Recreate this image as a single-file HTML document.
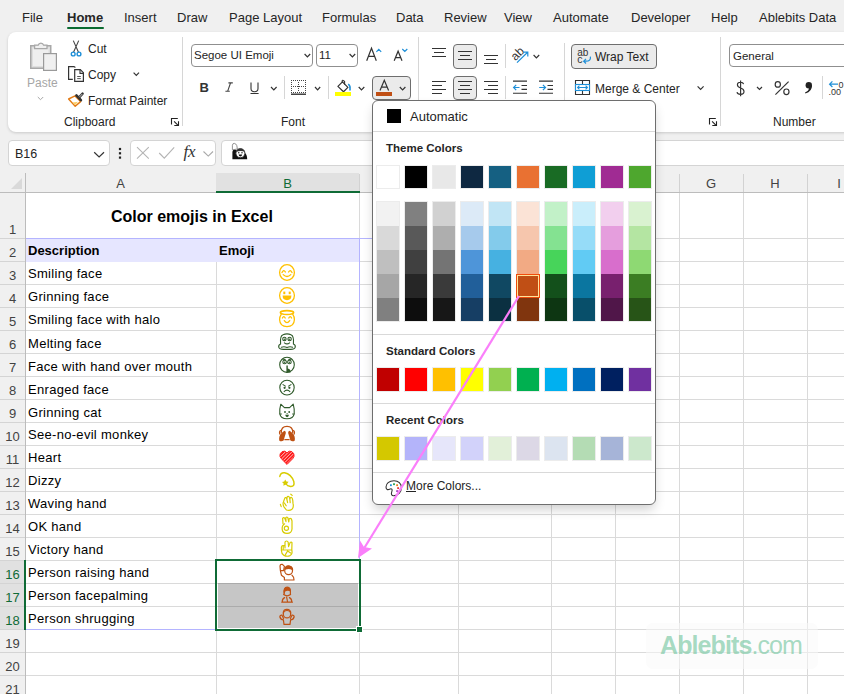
<!DOCTYPE html>
<html><head><meta charset="utf-8"><style>
html,body{margin:0;padding:0}
body{width:844px;height:694px;overflow:hidden;position:relative;background:#f0f0f0;font-family:"Liberation Sans", sans-serif}
.t{position:absolute;white-space:nowrap}
.r{position:absolute}
</style></head><body>
<div class="t" style="left:22px;top:11.00px;font-size:13px;line-height:13px;font-weight:400;color:#262626;">File</div>
<div class="t" style="left:67px;top:11.00px;font-size:13px;line-height:13px;font-weight:700;color:#262626;">Home</div>
<div class="t" style="left:124px;top:11.00px;font-size:13px;line-height:13px;font-weight:400;color:#262626;">Insert</div>
<div class="t" style="left:177px;top:11.00px;font-size:13px;line-height:13px;font-weight:400;color:#262626;">Draw</div>
<div class="t" style="left:229px;top:11.00px;font-size:13px;line-height:13px;font-weight:400;color:#262626;">Page Layout</div>
<div class="t" style="left:322px;top:11.00px;font-size:13px;line-height:13px;font-weight:400;color:#262626;">Formulas</div>
<div class="t" style="left:396px;top:11.00px;font-size:13px;line-height:13px;font-weight:400;color:#262626;">Data</div>
<div class="t" style="left:444px;top:11.00px;font-size:13px;line-height:13px;font-weight:400;color:#262626;">Review</div>
<div class="t" style="left:504px;top:11.00px;font-size:13px;line-height:13px;font-weight:400;color:#262626;">View</div>
<div class="t" style="left:553px;top:11.00px;font-size:13px;line-height:13px;font-weight:400;color:#262626;">Automate</div>
<div class="t" style="left:631px;top:11.00px;font-size:13px;line-height:13px;font-weight:400;color:#262626;">Developer</div>
<div class="t" style="left:711px;top:11.00px;font-size:13px;line-height:13px;font-weight:400;color:#262626;">Help</div>
<div class="t" style="left:759px;top:11.00px;font-size:13px;line-height:13px;font-weight:400;color:#262626;">Ablebits Data</div>
<div class="r" style="left:67px;top:27px;width:37px;height:2px;background:#0b6b30;border-radius:1px"></div>
<div class="r" style="left:8px;top:32px;width:900px;height:100px;background:#fff;border-radius:8px;box-shadow:0 1px 3px rgba(0,0,0,0.16)"></div>
<div class="r" style="left:182px;top:37px;width:1px;height:89px;background:#d6d6d6"></div>
<div class="r" style="left:418px;top:37px;width:1px;height:89px;background:#d6d6d6"></div>
<div class="r" style="left:564px;top:43px;width:1px;height:83px;background:#d6d6d6"></div>
<div class="r" style="left:720px;top:37px;width:1px;height:89px;background:#d6d6d6"></div>
<div class="r" style="left:284px;top:76px;width:1px;height:23px;background:#d6d6d6"></div>
<div class="r" style="left:328px;top:76px;width:1px;height:23px;background:#d6d6d6"></div>
<div class="r" style="left:505px;top:44px;width:1px;height:24px;background:#d6d6d6"></div>
<div class="r" style="left:505px;top:76px;width:1px;height:23px;background:#d6d6d6"></div>
<div class="r" style="left:822px;top:76px;width:1px;height:23px;background:#d6d6d6"></div>
<div class="t" style="left:64px;top:115.84px;font-size:12px;line-height:12px;font-weight:400;color:#242424;">Clipboard</div>
<div class="t" style="left:281px;top:115.84px;font-size:12px;line-height:12px;font-weight:400;color:#242424;">Font</div>
<div class="t" style="left:773px;top:115.84px;font-size:12px;line-height:12px;font-weight:400;color:#242424;">Number</div>
<div class="t" style="left:27px;top:76.84px;font-size:12px;line-height:12px;font-weight:400;color:#a6a6a6;">Paste</div>
<div class="t" style="left:88px;top:42.84px;font-size:12px;line-height:12px;font-weight:400;color:#242424;">Cut</div>
<div class="t" style="left:88px;top:68.84px;font-size:12px;line-height:12px;font-weight:400;color:#242424;">Copy</div>
<div class="t" style="left:88px;top:94.84px;font-size:12px;line-height:12px;font-weight:400;color:#242424;">Format Painter</div>
<div class="r" style="left:191px;top:44px;width:122px;height:23px;background:#fff;border:1px solid #8f8f8f;border-radius:4px;box-sizing:border-box"></div>
<div class="t" style="left:194px;top:50.27px;font-size:11.5px;line-height:11.5px;font-weight:400;color:#242424;">Segoe UI Emoji</div>
<div class="r" style="left:316px;top:44px;width:42px;height:23px;background:#fff;border:1px solid #8f8f8f;border-radius:4px;box-sizing:border-box"></div>
<div class="t" style="left:319px;top:50.27px;font-size:11.5px;line-height:11.5px;font-weight:400;color:#242424;">11</div>
<div class="r" style="left:453px;top:44px;width:24px;height:25px;background:#ebebeb;border:1px solid #6e6e6e;border-radius:4px;box-sizing:border-box"></div>
<div class="r" style="left:453px;top:76px;width:24px;height:24px;background:#ebebeb;border:1px solid #6e6e6e;border-radius:4px;box-sizing:border-box"></div>
<div class="r" style="left:571px;top:44px;width:86px;height:25px;background:#ebebeb;border:1px solid #6e6e6e;border-radius:4px;box-sizing:border-box"></div>
<div class="t" style="left:595px;top:50.84px;font-size:12px;line-height:12px;font-weight:400;color:#242424;">Wrap Text</div>
<div class="t" style="left:595px;top:83.34px;font-size:12px;line-height:12px;font-weight:400;color:#242424;">Merge &amp; Center</div>
<div class="r" style="left:372px;top:76px;width:39px;height:24px;background:#ebebeb;border:1px solid #6e6e6e;border-radius:4px;box-sizing:border-box"></div>
<div class="r" style="left:729px;top:44px;width:130px;height:23px;background:#fff;border:1px solid #8f8f8f;border-radius:4px;box-sizing:border-box"></div>
<div class="t" style="left:733px;top:50.77px;font-size:11.5px;line-height:11.5px;font-weight:400;color:#242424;">General</div>
<div class="r" style="left:8px;top:140px;width:102px;height:26px;background:#fff;border:1px solid #d4d4d4;border-radius:4px;box-sizing:border-box"></div>
<div class="t" style="left:15px;top:148.02px;font-size:12.5px;line-height:12.5px;font-weight:400;color:#242424;">B16</div>
<div class="r" style="left:130px;top:140px;width:86px;height:26px;background:#fff;border:1px solid #d4d4d4;border-radius:4px;box-sizing:border-box"></div>
<div class="r" style="left:221px;top:140px;width:640px;height:26px;background:#fff;border:1px solid #d4d4d4;border-radius:4px;box-sizing:border-box"></div>
<svg class="r" style="left:0;top:0" width="844" height="694"><rect x="30.75" y="45.75" width="20" height="22.5" fill="#dedede" stroke="#a8a8a8" stroke-width="1.5"/>
<rect x="33" y="48.5" width="15.5" height="17.5" fill="#efefef"/>
<path d="M34.6 48.6 V45.2 H38.2 A2.8 2.8 0 0 1 43.6 45.2 H47 V48.6 Z" fill="#f0f0f0" stroke="#a8a8a8" stroke-width="1.3"/>
<rect x="43.6" y="53.6" width="12.8" height="16.8" fill="#f0f0f0" stroke="#9a9a9a" stroke-width="1.2"/>
<path d="M37.8 97 L40.5 99.7 L43.2 97" stroke="#a6a6a6" fill="none" stroke-width="1"/>
<path d="M73.3 40.6 L78.5 52.2 M78.7 40.6 L73.5 52.2" stroke="#444" stroke-width="1.1" fill="none"/>
<circle cx="73.2" cy="54" r="1.9" stroke="#1e8fd8" stroke-width="1.4" fill="none"/><circle cx="79" cy="54" r="1.9" stroke="#1e8fd8" stroke-width="1.4" fill="none"/>
<path d="M75.4 67.6 L74 66.6 H68.6 V79.4 H72.8" fill="none" stroke="#333" stroke-width="1.2"/>
<path d="M74.7 69.6 H80.3 L83.4 72.7 V81.3 H74.7 Z" fill="#fff" stroke="#333" stroke-width="1.2"/>
<path d="M80 69.6 V73.4 H83.4" fill="none" stroke="#333" stroke-width="1.1"/>
<path d="M77.2 76.5 H80.8 M77.2 78.6 H80.8" stroke="#444" stroke-width="0.9"/>
<path d="M133.6 72.6 L136.3 75.3 L139 72.6" stroke="#333" fill="none" stroke-width="1.2"/>
<path d="M68.6 99 L75 95.9 L80.6 101.6 L75.2 106.3 Z" fill="#fff" stroke="#e27a14" stroke-width="1.4" stroke-linejoin="round"/>
<path d="M72.3 102.6 L78 101.8 L75.3 105 Z" fill="#fbcf66"/>
<path d="M76.4 95.4 L80.9 100.2" stroke="#333" stroke-width="2.6" stroke-linecap="round"/>
<path d="M78.9 97.6 L82.6 93.6" stroke="#333" stroke-width="2.4" stroke-linecap="round"/>
<path d="M79.3 97.2 L82.3 94" stroke="#fff" stroke-width="0.7"/>
<path d="M171.5 124.5 V118.5 H177.8 M174.1 121.4 L178.1 125.3 M174.3 125.5 H178.5 V121.3" stroke="#222" stroke-width="1.1" fill="none"/>
<path d="M709.5 124.5 V118.5 H715.8 M712.1 121.4 L716.1 125.3 M712.3 125.5 H716.5 V121.3" stroke="#222" stroke-width="1.1" fill="none"/>
<path d="M304.6 54 L307.4 56.8 L310.2 54 M349.6 54 L352.4 56.8 L355.2 54" stroke="#333" stroke-width="1.2" fill="none"/>
<path d="M366.7 60.8 L371.5 48.2 L376.3 60.8 M368.5 56.3 H374.5" stroke="#333" stroke-width="1.2" fill="none"/>
<path d="M376.4 51.9 L378.8 49.4 L381.2 51.9 M402.3 49 L404.8 51.5 L407.3 49" stroke="#1e8fd8" stroke-width="1.2" fill="none"/>
<path d="M394.2 60.8 L398.1 51.2 L402 60.8 M395.5 57.6 H400.7" stroke="#333" stroke-width="1.2" fill="none"/>
<text x="199.6" y="91.6" font-family="Liberation Sans" font-weight="700" font-size="13" fill="#333">B</text>
<path d="M230.6 82.8 L227.6 91.4 M228.4 82.9 H232.8 M225.4 91.3 H229.8" stroke="#444" stroke-width="1.1" fill="none"/>
<path d="M251 82.6 V88.6 Q251 91.8 254.5 91.8 Q258 91.8 258 88.6 V82.6 M250.5 93.5 H258.6" stroke="#333" stroke-width="1.1" fill="none"/>
<path d="M271 87 L273.8 89.8 L276.6 87 M315 87 L317.6 89.8 L320.2 87 M358.7 87 L361.5 89.8 L364.3 87 M399.8 87 L402.6 89.8 L405.4 87" stroke="#333" stroke-width="1.2" fill="none"/>
<path d="M291 80h1v1h-1zM291 86h1v1h-1zM291 92h1v1h-1zM293 80h1v1h-1zM293 86h1v1h-1zM293 92h1v1h-1zM295 80h1v1h-1zM295 86h1v1h-1zM295 92h1v1h-1zM297 80h1v1h-1zM297 86h1v1h-1zM297 92h1v1h-1zM299 80h1v1h-1zM299 86h1v1h-1zM299 92h1v1h-1zM301 80h1v1h-1zM301 86h1v1h-1zM301 92h1v1h-1zM303 80h1v1h-1zM303 86h1v1h-1zM303 92h1v1h-1zM305 80h1v1h-1zM305 86h1v1h-1zM305 92h1v1h-1zM291 82h1v1h-1zM298 82h1v1h-1zM305 82h1v1h-1zM291 84h1v1h-1zM298 84h1v1h-1zM305 84h1v1h-1zM291 86h1v1h-1zM298 86h1v1h-1zM305 86h1v1h-1zM291 88h1v1h-1zM298 88h1v1h-1zM305 88h1v1h-1zM291 90h1v1h-1zM298 90h1v1h-1zM305 90h1v1h-1z" fill="#444"/>
<path d="M291 94.2 H306" stroke="#222" stroke-width="1.3"/>
<path d="M337.9 86.4 L342.4 81.9 L347.9 87.4 L343.5 91.7 Z" fill="#fff" stroke="#333" stroke-width="1.2" stroke-linejoin="round"/>
<path d="M342.2 82 V80.8 Q342.6 79.9 343.6 80.6 L344.6 81.6 V84.8" stroke="#333" stroke-width="1.1" fill="none"/>
<path d="M348.2 84.2 Q350.4 85.6 350 88.6 V90.6" stroke="#1e8fd8" stroke-width="1.6" fill="none"/>
<rect x="335" y="92" width="16" height="4" fill="#ffff00"/>
<path d="M380 90.6 L384.3 80.3 L388.6 90.6 M381.5 87.2 H387.1" stroke="#333" stroke-width="1.2" fill="none"/>
<rect x="376" y="92" width="16" height="4" fill="#c04f15"/>
<path d="M432 48.5 H446 M434 52.5 H444 M432 56.5 H446 M458 51.5 H472 M460 55.5 H470 M458 59.5 H472 M484 55.5 H498 M486 59.5 H496 M484 63.5 H498 M432 81.5 H446 M432 85.5 H442 M432 89.5 H446 M432 93.5 H442 M458 81.5 H472 M460 85.5 H470 M458 89.5 H472 M460 93.5 H470 M484 81.5 H498 M488 85.5 H498 M484 89.5 H498 M488 93.5 H498 M513 81.1 H527 M521.5 85.5 H527 M521.5 89.4 H527 M513 93.3 H527 M539 81.1 H553 M547.5 85.5 H553 M547.5 89.4 H553 M539 93.3 H553" stroke="#333" stroke-width="1.1" fill="none"/>
<path d="M513.6 87.5 H519.5 M516.2 84.9 L513.6 87.5 L516.2 90.1 M539.2 87.5 H545.5 M542.9 84.9 L545.5 87.5 L542.9 90.1" stroke="#1e8fd8" stroke-width="1.2" fill="none"/>
<text x="510" y="57.8" font-family="Liberation Sans" font-size="12" fill="#333" transform="rotate(-45 517 53)">ab</text>
<path d="M517 62.6 L527.6 52.2 M523.2 52.2 H527.8 V56.6" stroke="#1e8fd8" stroke-width="1.2" fill="none"/>
<path d="M533.6 55 L536.4 57.8 L539.2 55" stroke="#333" stroke-width="1.2" fill="none"/>
<text x="577.2" y="55.6" font-family="Liberation Sans" font-size="10" fill="#333">ab</text>
<text x="577.2" y="63" font-family="Liberation Sans" font-size="10.5" fill="#333">c</text>
<path d="M590.4 56.6 Q591 61.2 586 61.2 H584 M586 58.9 L583.7 61.2 L586 63.5" stroke="#1e8fd8" stroke-width="1.2" fill="none"/>
<path d="M575.5 80.5 H589.5 V94.5 H575.5 Z M582.5 80.5 V84.5 M582.5 90.5 V94.5" stroke="#333" stroke-width="1.1" fill="none"/>
<rect x="575.5" y="84.5" width="14" height="6" stroke="#1e8fd8" stroke-width="1.1" fill="#fff"/>
<path d="M577.6 87.5 H587.4 M579.4 85.7 L577.6 87.5 L579.4 89.3 M585.6 85.7 L587.4 87.5 L585.6 89.3" stroke="#1e8fd8" stroke-width="1.1" fill="none"/>
<path d="M697.6 86.4 L700.6 89.4 L703.6 86.4" stroke="#333" stroke-width="1.2" fill="none"/>
<path d="M743.6 84.2 Q743.2 82.2 740.4 82.2 Q737.4 82.2 737.4 84.8 Q737.4 87 740.6 88 Q744 89 744 91.6 Q744 94.4 740.6 94.4 Q737.4 94.4 737 92.2 M740.6 80.6 V96.2" stroke="#333" stroke-width="1.15" fill="none"/>
<path d="M757 87 L759.5 89.5 L762 87" stroke="#333" stroke-width="1.2" fill="none"/>
<path d="M788.6 81.6 L775.4 94.6" stroke="#333" stroke-width="1.2" fill="none"/><ellipse cx="777.8" cy="84.4" rx="2.6" ry="2.8" stroke="#333" stroke-width="1.2" fill="none"/><ellipse cx="786.4" cy="91.8" rx="2.6" ry="2.8" stroke="#333" stroke-width="1.2" fill="none"/>
<circle cx="808.8" cy="85.2" r="3.2" fill="#222"/><path d="M811.8 85.6 Q812.4 91.4 805.4 93.6 L805 92.6 Q809.2 90.6 809 87.4 Z" fill="#222"/>
<path d="M829.6 84.2 H838 M832.4 81.4 L829.6 84.2 L832.4 87" stroke="#1e8fd8" stroke-width="1.2" fill="none"/>
<text x="838.6" y="88" font-family="Liberation Sans" font-size="9" fill="#333">0</text>
<text x="828.6" y="95.2" font-family="Liberation Sans" font-size="9" fill="#333">.00</text>
<path d="M94.2 152.2 L99.1 157 L104 152.2" stroke="#333" stroke-width="1.2" fill="none"/>
<rect x="118.9" y="147.9" width="2.2" height="2.2" fill="#222"/><rect x="118.9" y="152.2" width="2.2" height="2.2" fill="#222"/><rect x="118.9" y="156.5" width="2.2" height="2.2" fill="#222"/>
<path d="M137 147.2 L148.8 158.6 M148.8 147.2 L137 158.6 M159.2 153 L164.3 158.2 L174.2 147.4" stroke="#b4b4b4" stroke-width="1.1" fill="none"/>
<text x="183.4" y="157.4" font-family="Liberation Serif" font-style="italic" font-size="17" fill="#333">fx</text>
<path d="M203.5 151.5 L208.3 156.1 L213 151.5" stroke="#a8a8a8" stroke-width="1.1" fill="none"/>
<path d="M232.4 159.2 V151.8 Q232.6 149.4 235.2 149.4 L237.6 151.4 L238 156.2 H242.8 L244.2 152.6 Q247.2 154.4 247.2 159.2 Z" fill="#111"/>
<circle cx="240.4" cy="153.2" r="4.5" fill="#fff" stroke="#222" stroke-width="0.9"/>
<path d="M236 152 Q236.6 148.4 240.4 148.4 Q244.2 148.4 244.8 152 Q241 149.8 236 152 Z" fill="#333"/>
<circle cx="238.8" cy="152.8" r="0.7" fill="#111"/><circle cx="242" cy="152.8" r="0.7" fill="#111"/>
<path d="M238.6 154.6 H242.2 Q241.9 156.6 240.4 156.6 Q238.9 156.6 238.6 154.6 Z" fill="#111"/>
<path d="M232.4 149.8 V145.2 Q232.6 143.2 234.4 143.4 Q236 143.6 236.8 145.6 L237.4 149 Z" fill="#fff" stroke="#777" stroke-width="0.8"/></svg>
<div class="r" style="left:26px;top:193px;width:818px;height:501px;background:#fff"></div>
<div class="r" style="left:0px;top:166px;width:844px;height:26px;background:#f0f0f0"></div>
<div class="r" style="left:0px;top:193px;width:25px;height:501px;background:#f0f0f0"></div>
<div class="r" style="left:0px;top:561px;width:24px;height:68px;background:#e1e1e1"></div>
<div class="r" style="left:0px;top:192px;width:844px;height:1px;background:#bcbcbc"></div>
<div class="r" style="left:25px;top:173px;width:1px;height:521px;background:#bcbcbc"></div>
<div class="r" style="left:216px;top:174px;width:1px;height:18px;background:#d2d2d2"></div>
<div class="r" style="left:359px;top:174px;width:1px;height:18px;background:#d2d2d2"></div>
<div class="r" style="left:458px;top:174px;width:1px;height:18px;background:#d2d2d2"></div>
<div class="r" style="left:551px;top:174px;width:1px;height:18px;background:#d2d2d2"></div>
<div class="r" style="left:615px;top:174px;width:1px;height:18px;background:#d2d2d2"></div>
<div class="r" style="left:679px;top:174px;width:1px;height:18px;background:#d2d2d2"></div>
<div class="r" style="left:743px;top:174px;width:1px;height:18px;background:#d2d2d2"></div>
<div class="r" style="left:807px;top:174px;width:1px;height:18px;background:#d2d2d2"></div>
<div class="r" style="left:871px;top:174px;width:1px;height:18px;background:#d2d2d2"></div>
<div class="r" style="left:216px;top:173px;width:143px;height:18px;background:#e1e1e1"></div>
<div class="r" style="left:216px;top:191px;width:144px;height:2px;background:#0f6b36"></div>
<div class="r" style="left:0px;top:238px;width:25px;height:1px;background:#d4d4d4"></div>
<div class="r" style="left:0px;top:261px;width:25px;height:1px;background:#d4d4d4"></div>
<div class="r" style="left:0px;top:284px;width:25px;height:1px;background:#d4d4d4"></div>
<div class="r" style="left:0px;top:307px;width:25px;height:1px;background:#d4d4d4"></div>
<div class="r" style="left:0px;top:330px;width:25px;height:1px;background:#d4d4d4"></div>
<div class="r" style="left:0px;top:353px;width:25px;height:1px;background:#d4d4d4"></div>
<div class="r" style="left:0px;top:376px;width:25px;height:1px;background:#d4d4d4"></div>
<div class="r" style="left:0px;top:399px;width:25px;height:1px;background:#d4d4d4"></div>
<div class="r" style="left:0px;top:422px;width:25px;height:1px;background:#d4d4d4"></div>
<div class="r" style="left:0px;top:445px;width:25px;height:1px;background:#d4d4d4"></div>
<div class="r" style="left:0px;top:468px;width:25px;height:1px;background:#d4d4d4"></div>
<div class="r" style="left:0px;top:491px;width:25px;height:1px;background:#d4d4d4"></div>
<div class="r" style="left:0px;top:514px;width:25px;height:1px;background:#d4d4d4"></div>
<div class="r" style="left:0px;top:537px;width:25px;height:1px;background:#d4d4d4"></div>
<div class="r" style="left:0px;top:560px;width:25px;height:1px;background:#d4d4d4"></div>
<div class="r" style="left:0px;top:583px;width:25px;height:1px;background:#d4d4d4"></div>
<div class="r" style="left:0px;top:606px;width:25px;height:1px;background:#d4d4d4"></div>
<div class="r" style="left:0px;top:629px;width:25px;height:1px;background:#d4d4d4"></div>
<div class="r" style="left:0px;top:652px;width:25px;height:1px;background:#d4d4d4"></div>
<div class="r" style="left:0px;top:675px;width:25px;height:1px;background:#d4d4d4"></div>
<div class="r" style="left:0px;top:698px;width:25px;height:1px;background:#d4d4d4"></div>
<div class="r" style="left:24px;top:560px;width:2px;height:70px;background:#0f6b36"></div>
<div class="r" style="left:26px;top:238px;width:818px;height:1px;background:#dadada"></div>
<div class="r" style="left:26px;top:261px;width:818px;height:1px;background:#dadada"></div>
<div class="r" style="left:26px;top:284px;width:818px;height:1px;background:#dadada"></div>
<div class="r" style="left:26px;top:307px;width:818px;height:1px;background:#dadada"></div>
<div class="r" style="left:26px;top:330px;width:818px;height:1px;background:#dadada"></div>
<div class="r" style="left:26px;top:353px;width:818px;height:1px;background:#dadada"></div>
<div class="r" style="left:26px;top:376px;width:818px;height:1px;background:#dadada"></div>
<div class="r" style="left:26px;top:399px;width:818px;height:1px;background:#dadada"></div>
<div class="r" style="left:26px;top:422px;width:818px;height:1px;background:#dadada"></div>
<div class="r" style="left:26px;top:445px;width:818px;height:1px;background:#dadada"></div>
<div class="r" style="left:26px;top:468px;width:818px;height:1px;background:#dadada"></div>
<div class="r" style="left:26px;top:491px;width:818px;height:1px;background:#dadada"></div>
<div class="r" style="left:26px;top:514px;width:818px;height:1px;background:#dadada"></div>
<div class="r" style="left:26px;top:537px;width:818px;height:1px;background:#dadada"></div>
<div class="r" style="left:26px;top:560px;width:818px;height:1px;background:#dadada"></div>
<div class="r" style="left:26px;top:583px;width:818px;height:1px;background:#dadada"></div>
<div class="r" style="left:26px;top:606px;width:818px;height:1px;background:#dadada"></div>
<div class="r" style="left:26px;top:629px;width:818px;height:1px;background:#dadada"></div>
<div class="r" style="left:26px;top:652px;width:818px;height:1px;background:#dadada"></div>
<div class="r" style="left:26px;top:675px;width:818px;height:1px;background:#dadada"></div>
<div class="r" style="left:26px;top:698px;width:818px;height:1px;background:#dadada"></div>
<div class="r" style="left:216px;top:193px;width:1px;height:501px;background:#dadada"></div>
<div class="r" style="left:359px;top:193px;width:1px;height:501px;background:#dadada"></div>
<div class="r" style="left:458px;top:193px;width:1px;height:501px;background:#dadada"></div>
<div class="r" style="left:551px;top:193px;width:1px;height:501px;background:#dadada"></div>
<div class="r" style="left:615px;top:193px;width:1px;height:501px;background:#dadada"></div>
<div class="r" style="left:679px;top:193px;width:1px;height:501px;background:#dadada"></div>
<div class="r" style="left:743px;top:193px;width:1px;height:501px;background:#dadada"></div>
<div class="r" style="left:807px;top:193px;width:1px;height:501px;background:#dadada"></div>
<div class="r" style="left:871px;top:193px;width:1px;height:501px;background:#dadada"></div>
<div class="r" style="left:216px;top:193px;width:143px;height:45px;background:#fff"></div>
<div class="r" style="left:26px;top:239px;width:333px;height:23px;background:#e6e6ff"></div>
<div class="r" style="left:26px;top:238px;width:346px;height:1px;background:#b4b4ff"></div>
<div class="r" style="left:359px;top:238px;width:1px;height:391px;background:#b4b4ff"></div>
<div class="r" style="left:26px;top:629px;width:333px;height:1px;background:#b4b4ff"></div>
<div class="t" style="left:0;width:25px;text-align:center;top:223.00px;font-size:13px;line-height:13px;color:#424242">1</div>
<div class="t" style="left:0;width:25px;text-align:center;top:246.00px;font-size:13px;line-height:13px;color:#424242">2</div>
<div class="t" style="left:0;width:25px;text-align:center;top:269.00px;font-size:13px;line-height:13px;color:#424242">3</div>
<div class="t" style="left:0;width:25px;text-align:center;top:292.00px;font-size:13px;line-height:13px;color:#424242">4</div>
<div class="t" style="left:0;width:25px;text-align:center;top:315.00px;font-size:13px;line-height:13px;color:#424242">5</div>
<div class="t" style="left:0;width:25px;text-align:center;top:338.00px;font-size:13px;line-height:13px;color:#424242">6</div>
<div class="t" style="left:0;width:25px;text-align:center;top:361.00px;font-size:13px;line-height:13px;color:#424242">7</div>
<div class="t" style="left:0;width:25px;text-align:center;top:384.00px;font-size:13px;line-height:13px;color:#424242">8</div>
<div class="t" style="left:0;width:25px;text-align:center;top:407.00px;font-size:13px;line-height:13px;color:#424242">9</div>
<div class="t" style="left:0;width:25px;text-align:center;top:430.00px;font-size:13px;line-height:13px;color:#424242">10</div>
<div class="t" style="left:0;width:25px;text-align:center;top:453.00px;font-size:13px;line-height:13px;color:#424242">11</div>
<div class="t" style="left:0;width:25px;text-align:center;top:476.00px;font-size:13px;line-height:13px;color:#424242">12</div>
<div class="t" style="left:0;width:25px;text-align:center;top:499.00px;font-size:13px;line-height:13px;color:#424242">13</div>
<div class="t" style="left:0;width:25px;text-align:center;top:522.00px;font-size:13px;line-height:13px;color:#424242">14</div>
<div class="t" style="left:0;width:25px;text-align:center;top:545.00px;font-size:13px;line-height:13px;color:#424242">15</div>
<div class="t" style="left:0;width:25px;text-align:center;top:568.00px;font-size:13px;line-height:13px;color:#0f6b36">16</div>
<div class="t" style="left:0;width:25px;text-align:center;top:591.00px;font-size:13px;line-height:13px;color:#0f6b36">17</div>
<div class="t" style="left:0;width:25px;text-align:center;top:614.00px;font-size:13px;line-height:13px;color:#0f6b36">18</div>
<div class="t" style="left:0;width:25px;text-align:center;top:637.00px;font-size:13px;line-height:13px;color:#424242">19</div>
<div class="t" style="left:0;width:25px;text-align:center;top:660.00px;font-size:13px;line-height:13px;color:#424242">20</div>
<div class="t" style="left:0;width:25px;text-align:center;top:683.00px;font-size:13px;line-height:13px;color:#424242">21</div>
<div class="t" style="left:25px;width:191px;text-align:center;top:177.00px;font-size:13px;line-height:13px;color:#424242">A</div>
<div class="t" style="left:216px;width:143px;text-align:center;top:177.00px;font-size:13px;line-height:13px;color:#0f6b36">B</div>
<div class="t" style="left:679px;width:64px;text-align:center;top:177.00px;font-size:13px;line-height:13px;color:#424242">G</div>
<div class="t" style="left:743px;width:64px;text-align:center;top:177.00px;font-size:13px;line-height:13px;color:#424242">H</div>
<div class="t" style="left:807px;width:64px;text-align:center;top:177.00px;font-size:13px;line-height:13px;color:#424242">I</div>
<svg class="r" style="left:0;top:0" width="30" height="200"><path d="M22 178 V189 H11 Z" fill="#d9d9d9"/></svg>
<div class="r" style="left:218px;top:583px;width:140px;height:45px;background:#c6c6c6"></div>
<div class="r" style="left:218px;top:606px;width:140px;height:1px;background:#ababab"></div>
<div class="r" style="left:218px;top:583px;width:140px;height:1px;background:#ababab"></div>
<div class="r" style="left:215px;top:559px;width:146px;height:72px;border:2px solid #0f6b36;box-sizing:border-box"></div>
<div class="r" style="left:356px;top:626px;width:7px;height:7px;background:#0f6b36;border:1px solid #fff;box-sizing:border-box"></div>
<svg class="r" style="left:0;top:0" width="844" height="694"><g stroke="#ffc000" stroke-width="1.3" fill="none" stroke-linecap="round"><ellipse cx="287" cy="272.5" rx="7.4" ry="7.8"/><path d="M282 272.6 Q283.6 268.8 285.4 272 M288.6 272 Q290.4 268.8 292 272.6 M283.2 274.6 Q287 278.4 290.8 274.6"/></g>
<g stroke="#ffc000" stroke-width="1.3" fill="none"><ellipse cx="287" cy="295.5" rx="7.4" ry="7.8"/></g><rect x="283.3" y="291.6" width="2" height="2.6" fill="#ffc000"/><rect x="288.7" y="291.6" width="2" height="2.6" fill="#ffc000"/><path d="M282.6 295.6 H291.4 Q291.4 300.2 287 300.2 Q282.6 300.2 282.6 295.6 Z" fill="#ffc000"/>
<g stroke="#ffc000" stroke-width="1.3" fill="none" stroke-linecap="round"><path d="M281.2 314.4 Q279.4 317 279.6 319.8 Q280 326.6 287 326.6 Q294 326.6 294.4 319.8 Q294.6 317 292.8 314.4"/><ellipse cx="287" cy="312.6" rx="6.6" ry="1.9" stroke-width="1.7"/><path d="M282.4 318 Q283.8 315.4 285.2 318 M288.8 318 Q290.2 315.4 291.6 318 M284.3 320.6 Q287 324.8 289.7 320.6"/></g>
<g stroke="#2f5a2a" stroke-width="1.1" fill="none" stroke-linecap="round" stroke-linejoin="round"><path d="M280.6 344 Q279.8 336 283 334.8 Q287 333 291 334.8 Q294.2 336 293.4 344 Q295.8 345 295.2 347.4 Q294.4 349.6 290 349.4 L284 349.4 Q279.6 349.6 278.8 347.4 Q278.2 345 280.6 344 Z"/><circle cx="284.4" cy="339" r="1.7"/><circle cx="289.6" cy="339" r="1.7"/><path d="M284.4 342.8 Q287 345 289.6 342.8 M281.4 347.2 Q284 346.2 287 347.4 Q290 346.2 292.6 347.2"/></g><circle cx="284.6" cy="339.2" r="0.7" fill="#2f5a2a"/><circle cx="289.4" cy="339.2" r="0.7" fill="#2f5a2a"/>
<g stroke="#2f5a2a" stroke-width="1.1" fill="none"><ellipse cx="287" cy="364.8" rx="7.3" ry="7.6"/><circle cx="284.6" cy="362" r="1.8"/><circle cx="289.4" cy="362" r="1.8"/><path d="M282.2 359 L285.6 359.6 M291.8 359 L288.4 359.6"/></g><circle cx="284.6" cy="362.2" r="0.7" fill="#2f5a2a"/><circle cx="289.4" cy="362.2" r="0.7" fill="#2f5a2a"/><path d="M286.4 365.6 H287.8 V368.4 Q290.8 368.8 290.6 372.4 H286.4 Z" fill="#2f5a2a"/>
<g stroke="#2f5a2a" stroke-width="1.1" fill="none"><ellipse cx="287" cy="387.6" rx="7.2" ry="7.4"/><path d="M282.6 384.4 L285.8 386.4 M291.4 384.4 L288.2 386.4 M283.8 391.8 Q287 388.6 290.2 391.8"/></g><circle cx="284.6" cy="387.8" r="1.1" fill="#2f5a2a"/><circle cx="289.4" cy="387.8" r="1.1" fill="#2f5a2a"/>
<g stroke="#2f5a2a" stroke-width="1.1" fill="none" stroke-linejoin="round"><path d="M280.8 404.2 L284.4 407.6 H289.6 L293.2 404.2 Q294.6 409 294.2 413.6 Q293.4 418.8 287 418.8 Q280.6 418.8 279.8 413.6 Q279.4 409 280.8 404.2 Z"/><path d="M279.4 414 H282 M292 414 H294.6" stroke-width="0.8"/></g><circle cx="285" cy="412" r="0.9" fill="#2f5a2a"/><circle cx="289.2" cy="412" r="0.9" fill="#2f5a2a"/><circle cx="287.1" cy="413.6" r="0.6" fill="#2f5a2a"/><path d="M285.2 414.8 H289 Q288.6 417.2 287.1 417.2 Q285.6 417.2 285.2 414.8 Z" fill="#2f5a2a"/>
<g stroke="#bf5214" stroke-width="1.3" fill="none"><path d="M281.2 433 Q281 426.4 287 426.4 Q293 426.4 292.8 433"/><path d="M280 434.4 Q278.6 430.8 281.4 430.4 M294 434.4 Q295.4 430.8 292.6 430.4 M284.4 439.6 H289.6"/></g><path d="M279.2 440.4 Q278.6 436 281.6 433 L284.4 430.8 Q286.6 431.6 285.4 434.6 L283.6 440.6 Q281.2 442 279.2 440.4 Z" fill="#bf5214"/><path d="M294.8 440.4 Q295.4 436 292.4 433 L289.6 430.8 Q287.4 431.6 288.6 434.6 L290.4 440.6 Q292.8 442 294.8 440.4 Z" fill="#bf5214"/>
<defs><pattern id="hs" width="2.4" height="2.4" patternUnits="userSpaceOnUse" patternTransform="rotate(45)"><rect width="2.4" height="2.4" fill="#ff1010"/><rect width="0.9" height="2.4" fill="#ffb0b0"/></pattern></defs>
<path d="M287 464.4 L281.2 458.6 Q279.2 456.4 280.2 453.8 Q281.6 451 284.4 451.2 Q286 451.4 287 453 Q288 451.4 289.6 451.2 Q292.4 451 293.8 453.8 Q294.8 456.4 292.8 458.6 Z" fill="url(#hs)" stroke="#ff1a1a" stroke-width="1"/>
<path d="M279.8 476.4 Q280.6 472.4 284.6 472.8 Q291.2 474 293.8 481.6 Q295 486.6 290.6 486.4 L287.6 485.6" stroke="#d8cc00" stroke-width="1.5" fill="none" stroke-linecap="round"/><path d="M285.2 479.4 L286.4 481.4 L288.6 481.8 L287.2 483.6 L287.6 485.8 L285.4 484.8 L283.4 485.8 L283.6 483.6 L282 482 L284.2 481.4 Z" fill="#d8cc00"/>
<g stroke="#d8cc00" stroke-width="1.2" fill="none" stroke-linecap="round" stroke-linejoin="round"><path d="M283.8 506.6 Q282.6 504 283.4 502 L284.6 498.6 Q285.2 497 286.4 497.8 L286.8 498.8 L287.2 496.8 Q288 495.8 289 496.6 L289.8 498.6 L290.6 497.6 Q291.6 497 292.2 498.2 L292.8 500.6 L293 503.4 Q294 507 292 509.2 Q289.6 511.2 286.4 510 Z"/><path d="M286.8 498.8 L287.6 502.6 M289.8 498.6 L290.2 502.6 M284.4 503 L286.2 505.8 M280.4 504.4 L281.2 506.6 M290.8 494.2 L292.2 495.4"/></g>
<g stroke="#d8cc00" stroke-width="1.2" fill="none" stroke-linecap="round" stroke-linejoin="round"><path d="M283 523.6 L282.6 518.4 Q283.6 517.2 284.8 518.2 L286 521.6 L285.8 517.6 Q286.8 516.8 287.8 517.6 L288.8 522 L289.2 518.8 Q290.4 518 291.4 519 L292 521 V529 Q291.6 533.4 287 533.4 Q282.6 533.4 282.2 529.4 Q281.8 525.6 284.6 523.8"/><circle cx="286.4" cy="528.2" r="2.1"/></g>
<g stroke="#d8cc00" stroke-width="1.2" fill="none" stroke-linecap="round" stroke-linejoin="round"><path d="M285 548 V542.2 Q285.2 541 286.6 541 Q287.8 541 288.2 542.4 L288.6 546.6 L290.2 542.4 Q291.2 541.6 292 542.6 L291.8 549.8 Q292.8 554 290 555.6 Q287 557 284 555.4 Q281.4 553.6 281.4 550.4 V547 Q281.6 545.4 283.2 545.6 L285 546"/><path d="M283.2 545.6 V549.6 M281.8 550 H291.6 M285.4 554.6 L287.6 551 L290.6 553"/></g>
<g stroke="#bf5214" stroke-width="1.2" fill="none" stroke-linecap="round" stroke-linejoin="round"><path d="M280 566 Q280.4 564 282.4 564.4 L284.4 566.4 L283.6 570.6 H280.4 Z M280.4 570.6 L281.4 575.2 L284.4 577.4 V580 H294 Q294.2 577 292 575.2"/><circle cx="288.6" cy="570.8" r="3.9"/><path d="M284.8 569 Q286 565.6 289 566 Q292.6 566.4 292.6 570"/></g><path d="M284.8 569.8 Q285 565.6 289 565.6 Q292.8 565.8 292.8 570.6 Q290.4 567.8 284.8 569.8 Z" fill="#bf5214"/>
<g stroke="#bf5214" stroke-width="1.2" fill="none" stroke-linecap="round" stroke-linejoin="round"><path d="M284.2 594 Q283.2 587.2 287.2 587.2 Q291 587.2 290.4 594 M283.6 594.6 Q287 597 290.6 594.6"/><path d="M282.2 602 Q282.2 598.6 284.6 597.6 M291.8 602 Q291.8 598.6 289.4 597.6 M281.8 602.2 H292.4 M286.6 597 L287.6 602"/></g><path d="M283.8 594.4 Q282.6 587 287.4 587 Q291.4 587.2 290.8 592 Q288 589.6 285.2 591.6 Q285 593.4 283.8 594.4 Z" fill="#bf5214"/>
<g stroke="#bf5214" stroke-width="1.2" fill="none" stroke-linecap="round" stroke-linejoin="round"><circle cx="287" cy="614.2" r="3.7"/><path d="M283.2 613 Q283.6 609.2 287 609.4 Q290.6 609.6 290.8 613"/><path d="M279.8 617 Q280 614.8 282 615.2 L283.6 618.6 M294.2 617 Q294 614.8 292 615.2 L290.4 618.6 M280 617 Q280.6 619.8 283.4 619.8 L284 624.4 H290 L290.6 619.8 Q293.4 619.8 294 617"/></g></svg>
<div class="t" style="left:111px;top:209.46px;font-size:16px;line-height:16px;font-weight:700;color:#000;">Color emojis in Excel</div>
<div class="t" style="left:28px;top:244.00px;font-size:13px;line-height:13px;font-weight:700;color:#000;">Description</div>
<div class="t" style="left:219px;top:244.00px;font-size:13px;line-height:13px;font-weight:700;color:#000;">Emoji</div>
<div class="t" style="left:28px;top:267.00px;font-size:13px;line-height:13px;font-weight:400;color:#000;letter-spacing:0.3px">Smiling face</div>
<div class="t" style="left:28px;top:290.00px;font-size:13px;line-height:13px;font-weight:400;color:#000;letter-spacing:0.3px">Grinning face</div>
<div class="t" style="left:28px;top:313.00px;font-size:13px;line-height:13px;font-weight:400;color:#000;letter-spacing:0.3px">Smiling face with halo</div>
<div class="t" style="left:28px;top:337.40px;font-size:13px;line-height:13px;font-weight:400;color:#000;letter-spacing:0.3px">Melting face</div>
<div class="t" style="left:28px;top:360.40px;font-size:13px;line-height:13px;font-weight:400;color:#000;letter-spacing:0.3px">Face with hand over mouth</div>
<div class="t" style="left:28px;top:383.40px;font-size:13px;line-height:13px;font-weight:400;color:#000;letter-spacing:0.3px">Enraged face</div>
<div class="t" style="left:28px;top:406.40px;font-size:13px;line-height:13px;font-weight:400;color:#000;letter-spacing:0.3px">Grinning cat</div>
<div class="t" style="left:28px;top:428.00px;font-size:13px;line-height:13px;font-weight:400;color:#000;letter-spacing:0.3px">See-no-evil monkey</div>
<div class="t" style="left:28px;top:451.00px;font-size:13px;line-height:13px;font-weight:400;color:#000;letter-spacing:0.3px">Heart</div>
<div class="t" style="left:28px;top:474.00px;font-size:13px;line-height:13px;font-weight:400;color:#000;letter-spacing:0.3px">Dizzy</div>
<div class="t" style="left:28px;top:497.00px;font-size:13px;line-height:13px;font-weight:400;color:#000;letter-spacing:0.3px">Waving hand</div>
<div class="t" style="left:28px;top:520.00px;font-size:13px;line-height:13px;font-weight:400;color:#000;letter-spacing:0.3px">OK hand</div>
<div class="t" style="left:28px;top:543.00px;font-size:13px;line-height:13px;font-weight:400;color:#000;letter-spacing:0.3px">Victory hand</div>
<div class="t" style="left:28px;top:566.00px;font-size:13px;line-height:13px;font-weight:400;color:#000;letter-spacing:0.3px">Person raising hand</div>
<div class="t" style="left:28px;top:589.00px;font-size:13px;line-height:13px;font-weight:400;color:#000;letter-spacing:0.3px">Person facepalming</div>
<div class="t" style="left:28px;top:612.00px;font-size:13px;line-height:13px;font-weight:400;color:#000;letter-spacing:0.3px">Person shrugging</div>
<div class="r" style="left:372px;top:100px;width:284px;height:405px;background:#fff;border:1px solid #6e6e6e;border-radius:6px;box-sizing:border-box;box-shadow:0 6px 12px -2px rgba(0,0,0,0.2)"></div>
<div class="r" style="left:387px;top:109px;width:14px;height:14px;background:#000"></div>
<div class="t" style="left:410px;top:110.00px;font-size:13px;line-height:13px;font-weight:400;color:#242424;">Automatic</div>
<div class="r" style="left:373px;top:131px;width:282px;height:1px;background:#d9d9d9"></div>
<div class="t" style="left:386px;top:143.27px;font-size:11.5px;line-height:11.5px;font-weight:700;color:#262626;">Theme Colors</div>
<div class="r" style="left:376px;top:165px;width:24px;height:24px;background:#ececec"></div>
<div class="r" style="left:377px;top:166px;width:22px;height:22px;background:#FFFFFF"></div>
<div class="r" style="left:376px;top:201px;width:24px;height:121px;background:#ececec"></div>
<div class="r" style="left:377px;top:202px;width:22px;height:24px;background:#F2F2F2"></div>
<div class="r" style="left:377px;top:226px;width:22px;height:24px;background:#D9D9D9"></div>
<div class="r" style="left:377px;top:250px;width:22px;height:24px;background:#BFBFBF"></div>
<div class="r" style="left:377px;top:274px;width:22px;height:24px;background:#A6A6A6"></div>
<div class="r" style="left:377px;top:298px;width:22px;height:23px;background:#808080"></div>
<div class="r" style="left:376px;top:367px;width:24px;height:25px;background:#ececec"></div>
<div class="r" style="left:377px;top:368px;width:22px;height:23px;background:#C00000"></div>
<div class="r" style="left:376px;top:436px;width:24px;height:25px;background:#ececec"></div>
<div class="r" style="left:377px;top:437px;width:22px;height:23px;background:#D4C800"></div>
<div class="r" style="left:404px;top:165px;width:24px;height:24px;background:#ececec"></div>
<div class="r" style="left:405px;top:166px;width:22px;height:22px;background:#000000"></div>
<div class="r" style="left:404px;top:201px;width:24px;height:121px;background:#ececec"></div>
<div class="r" style="left:405px;top:202px;width:22px;height:24px;background:#808080"></div>
<div class="r" style="left:405px;top:226px;width:22px;height:24px;background:#595959"></div>
<div class="r" style="left:405px;top:250px;width:22px;height:24px;background:#404040"></div>
<div class="r" style="left:405px;top:274px;width:22px;height:24px;background:#262626"></div>
<div class="r" style="left:405px;top:298px;width:22px;height:23px;background:#0D0D0D"></div>
<div class="r" style="left:404px;top:367px;width:24px;height:25px;background:#ececec"></div>
<div class="r" style="left:405px;top:368px;width:22px;height:23px;background:#FF0000"></div>
<div class="r" style="left:404px;top:436px;width:24px;height:25px;background:#ececec"></div>
<div class="r" style="left:405px;top:437px;width:22px;height:23px;background:#B4B4FA"></div>
<div class="r" style="left:432px;top:165px;width:24px;height:24px;background:#ececec"></div>
<div class="r" style="left:433px;top:166px;width:22px;height:22px;background:#E8E8E8"></div>
<div class="r" style="left:432px;top:201px;width:24px;height:121px;background:#ececec"></div>
<div class="r" style="left:433px;top:202px;width:22px;height:24px;background:#D1D1D1"></div>
<div class="r" style="left:433px;top:226px;width:22px;height:24px;background:#AEAEAE"></div>
<div class="r" style="left:433px;top:250px;width:22px;height:24px;background:#747474"></div>
<div class="r" style="left:433px;top:274px;width:22px;height:24px;background:#3A3A3A"></div>
<div class="r" style="left:433px;top:298px;width:22px;height:23px;background:#171717"></div>
<div class="r" style="left:432px;top:367px;width:24px;height:25px;background:#ececec"></div>
<div class="r" style="left:433px;top:368px;width:22px;height:23px;background:#FFC000"></div>
<div class="r" style="left:432px;top:436px;width:24px;height:25px;background:#ececec"></div>
<div class="r" style="left:433px;top:437px;width:22px;height:23px;background:#E6E6FA"></div>
<div class="r" style="left:460px;top:165px;width:24px;height:24px;background:#ececec"></div>
<div class="r" style="left:461px;top:166px;width:22px;height:22px;background:#0E2841"></div>
<div class="r" style="left:460px;top:201px;width:24px;height:121px;background:#ececec"></div>
<div class="r" style="left:461px;top:202px;width:22px;height:24px;background:#DCEAF7"></div>
<div class="r" style="left:461px;top:226px;width:22px;height:24px;background:#A6CAEC"></div>
<div class="r" style="left:461px;top:250px;width:22px;height:24px;background:#4E95D9"></div>
<div class="r" style="left:461px;top:274px;width:22px;height:24px;background:#215F9A"></div>
<div class="r" style="left:461px;top:298px;width:22px;height:23px;background:#163E64"></div>
<div class="r" style="left:460px;top:367px;width:24px;height:25px;background:#ececec"></div>
<div class="r" style="left:461px;top:368px;width:22px;height:23px;background:#FFFF00"></div>
<div class="r" style="left:460px;top:436px;width:24px;height:25px;background:#ececec"></div>
<div class="r" style="left:461px;top:437px;width:22px;height:23px;background:#D2D2FA"></div>
<div class="r" style="left:488px;top:165px;width:24px;height:24px;background:#ececec"></div>
<div class="r" style="left:489px;top:166px;width:22px;height:22px;background:#156082"></div>
<div class="r" style="left:488px;top:201px;width:24px;height:121px;background:#ececec"></div>
<div class="r" style="left:489px;top:202px;width:22px;height:24px;background:#C1E5F5"></div>
<div class="r" style="left:489px;top:226px;width:22px;height:24px;background:#83CBEB"></div>
<div class="r" style="left:489px;top:250px;width:22px;height:24px;background:#46B1E1"></div>
<div class="r" style="left:489px;top:274px;width:22px;height:24px;background:#104862"></div>
<div class="r" style="left:489px;top:298px;width:22px;height:23px;background:#0B3041"></div>
<div class="r" style="left:488px;top:367px;width:24px;height:25px;background:#ececec"></div>
<div class="r" style="left:489px;top:368px;width:22px;height:23px;background:#92D050"></div>
<div class="r" style="left:488px;top:436px;width:24px;height:25px;background:#ececec"></div>
<div class="r" style="left:489px;top:437px;width:22px;height:23px;background:#E2F0D9"></div>
<div class="r" style="left:516px;top:165px;width:24px;height:24px;background:#ececec"></div>
<div class="r" style="left:517px;top:166px;width:22px;height:22px;background:#E97132"></div>
<div class="r" style="left:516px;top:201px;width:24px;height:121px;background:#ececec"></div>
<div class="r" style="left:517px;top:202px;width:22px;height:24px;background:#FBE3D6"></div>
<div class="r" style="left:517px;top:226px;width:22px;height:24px;background:#F6C6AD"></div>
<div class="r" style="left:517px;top:250px;width:22px;height:24px;background:#F2AA84"></div>
<div class="r" style="left:517px;top:274px;width:22px;height:24px;background:#C04F15"></div>
<div class="r" style="left:517px;top:298px;width:22px;height:23px;background:#80350E"></div>
<div class="r" style="left:516px;top:367px;width:24px;height:25px;background:#ececec"></div>
<div class="r" style="left:517px;top:368px;width:22px;height:23px;background:#00B050"></div>
<div class="r" style="left:516px;top:436px;width:24px;height:25px;background:#ececec"></div>
<div class="r" style="left:517px;top:437px;width:22px;height:23px;background:#DCD8E6"></div>
<div class="r" style="left:544px;top:165px;width:24px;height:24px;background:#ececec"></div>
<div class="r" style="left:545px;top:166px;width:22px;height:22px;background:#196B24"></div>
<div class="r" style="left:544px;top:201px;width:24px;height:121px;background:#ececec"></div>
<div class="r" style="left:545px;top:202px;width:22px;height:24px;background:#C2F1C8"></div>
<div class="r" style="left:545px;top:226px;width:22px;height:24px;background:#84E291"></div>
<div class="r" style="left:545px;top:250px;width:22px;height:24px;background:#47D45A"></div>
<div class="r" style="left:545px;top:274px;width:22px;height:24px;background:#13501B"></div>
<div class="r" style="left:545px;top:298px;width:22px;height:23px;background:#0D3612"></div>
<div class="r" style="left:544px;top:367px;width:24px;height:25px;background:#ececec"></div>
<div class="r" style="left:545px;top:368px;width:22px;height:23px;background:#00B0F0"></div>
<div class="r" style="left:544px;top:436px;width:24px;height:25px;background:#ececec"></div>
<div class="r" style="left:545px;top:437px;width:22px;height:23px;background:#DCE4F0"></div>
<div class="r" style="left:572px;top:165px;width:24px;height:24px;background:#ececec"></div>
<div class="r" style="left:573px;top:166px;width:22px;height:22px;background:#0F9ED5"></div>
<div class="r" style="left:572px;top:201px;width:24px;height:121px;background:#ececec"></div>
<div class="r" style="left:573px;top:202px;width:22px;height:24px;background:#CAEEFB"></div>
<div class="r" style="left:573px;top:226px;width:22px;height:24px;background:#96DCF8"></div>
<div class="r" style="left:573px;top:250px;width:22px;height:24px;background:#61CBF4"></div>
<div class="r" style="left:573px;top:274px;width:22px;height:24px;background:#0B76A0"></div>
<div class="r" style="left:573px;top:298px;width:22px;height:23px;background:#084F6A"></div>
<div class="r" style="left:572px;top:367px;width:24px;height:25px;background:#ececec"></div>
<div class="r" style="left:573px;top:368px;width:22px;height:23px;background:#0070C0"></div>
<div class="r" style="left:572px;top:436px;width:24px;height:25px;background:#ececec"></div>
<div class="r" style="left:573px;top:437px;width:22px;height:23px;background:#B4DCB4"></div>
<div class="r" style="left:600px;top:165px;width:24px;height:24px;background:#ececec"></div>
<div class="r" style="left:601px;top:166px;width:22px;height:22px;background:#A02B93"></div>
<div class="r" style="left:600px;top:201px;width:24px;height:121px;background:#ececec"></div>
<div class="r" style="left:601px;top:202px;width:22px;height:24px;background:#F2CFEE"></div>
<div class="r" style="left:601px;top:226px;width:22px;height:24px;background:#E59EDD"></div>
<div class="r" style="left:601px;top:250px;width:22px;height:24px;background:#D86ECC"></div>
<div class="r" style="left:601px;top:274px;width:22px;height:24px;background:#78206E"></div>
<div class="r" style="left:601px;top:298px;width:22px;height:23px;background:#501649"></div>
<div class="r" style="left:600px;top:367px;width:24px;height:25px;background:#ececec"></div>
<div class="r" style="left:601px;top:368px;width:22px;height:23px;background:#002060"></div>
<div class="r" style="left:600px;top:436px;width:24px;height:25px;background:#ececec"></div>
<div class="r" style="left:601px;top:437px;width:22px;height:23px;background:#A6B4D8"></div>
<div class="r" style="left:628px;top:165px;width:24px;height:24px;background:#ececec"></div>
<div class="r" style="left:629px;top:166px;width:22px;height:22px;background:#4EA72E"></div>
<div class="r" style="left:628px;top:201px;width:24px;height:121px;background:#ececec"></div>
<div class="r" style="left:629px;top:202px;width:22px;height:24px;background:#D9F2D0"></div>
<div class="r" style="left:629px;top:226px;width:22px;height:24px;background:#B4E5A2"></div>
<div class="r" style="left:629px;top:250px;width:22px;height:24px;background:#8ED973"></div>
<div class="r" style="left:629px;top:274px;width:22px;height:24px;background:#3B7D23"></div>
<div class="r" style="left:629px;top:298px;width:22px;height:23px;background:#275417"></div>
<div class="r" style="left:628px;top:367px;width:24px;height:25px;background:#ececec"></div>
<div class="r" style="left:629px;top:368px;width:22px;height:23px;background:#7030A0"></div>
<div class="r" style="left:628px;top:436px;width:24px;height:25px;background:#ececec"></div>
<div class="r" style="left:629px;top:437px;width:22px;height:23px;background:#CCE8CC"></div>
<div class="r" style="left:516px;top:274px;width:24px;height:24px;border:1px solid #f04c0c;box-sizing:border-box"></div>
<div class="r" style="left:517px;top:275px;width:22px;height:22px;border:1px solid #ffe49a;box-sizing:border-box"></div>
<div class="r" style="left:373px;top:334px;width:282px;height:1px;background:#d9d9d9"></div>
<div class="t" style="left:386px;top:346.27px;font-size:11.5px;line-height:11.5px;font-weight:700;color:#262626;">Standard Colors</div>
<div class="r" style="left:373px;top:403px;width:282px;height:1px;background:#d9d9d9"></div>
<div class="t" style="left:386px;top:415.27px;font-size:11.5px;line-height:11.5px;font-weight:700;color:#262626;">Recent Colors</div>
<div class="r" style="left:373px;top:472px;width:282px;height:1px;background:#d9d9d9"></div>
<div class="t" style="left:406px;top:479.84px;font-size:12px;line-height:12px;font-weight:400;color:#242424;"><u>M</u>ore Colors...</div>
<svg class="r" style="left:0;top:0" width="844" height="694"><path d="M394 480.7 C389 480.7 386 483.8 386 487.1 C386 489.6 387.8 490.1 389.6 489.2 C391.6 488.2 392.8 489.2 391.8 491.6 C390.8 494.2 391.8 495.8 393.6 495.7 C398.6 495.4 401.4 491.6 401.4 487.6 C401.4 483.6 398.4 480.7 394 480.7 Z" fill="#fff" stroke="#333" stroke-width="1.1"/><rect x="390" y="484.3" width="1.8" height="1.8" fill="#1e8fd8"/><rect x="393.1" y="483.3" width="1.8" height="1.8" fill="#22a04a"/><rect x="396.2" y="484.3" width="1.8" height="1.8" fill="#ee7a10"/><rect x="397.2" y="487.2" width="1.8" height="1.8" fill="#e83a3a"/><rect x="396.2" y="490.2" width="1.8" height="1.8" fill="#9a3cb8"/></svg>
<div class="r" style="left:646px;top:623px;width:172px;height:46px;background:rgba(250,250,250,0.5);border-radius:7px"></div>
<div class="t" style="left:660px;top:633.34px;font-size:25px;line-height:25px;font-weight:400;color:rgba(110,195,155,0.62);letter-spacing:-0.9px"><b>Ablebits</b>.com</div>
<svg class="r" style="left:0;top:0" width="844" height="694"><line x1="519" y1="296" x2="364.6" y2="547.5" stroke="#fa7ffa" stroke-width="2.2"/><polygon points="358,558 360,540.5 364,547 372,548.5" fill="#fa7ffa"/></svg>
</body></html>
